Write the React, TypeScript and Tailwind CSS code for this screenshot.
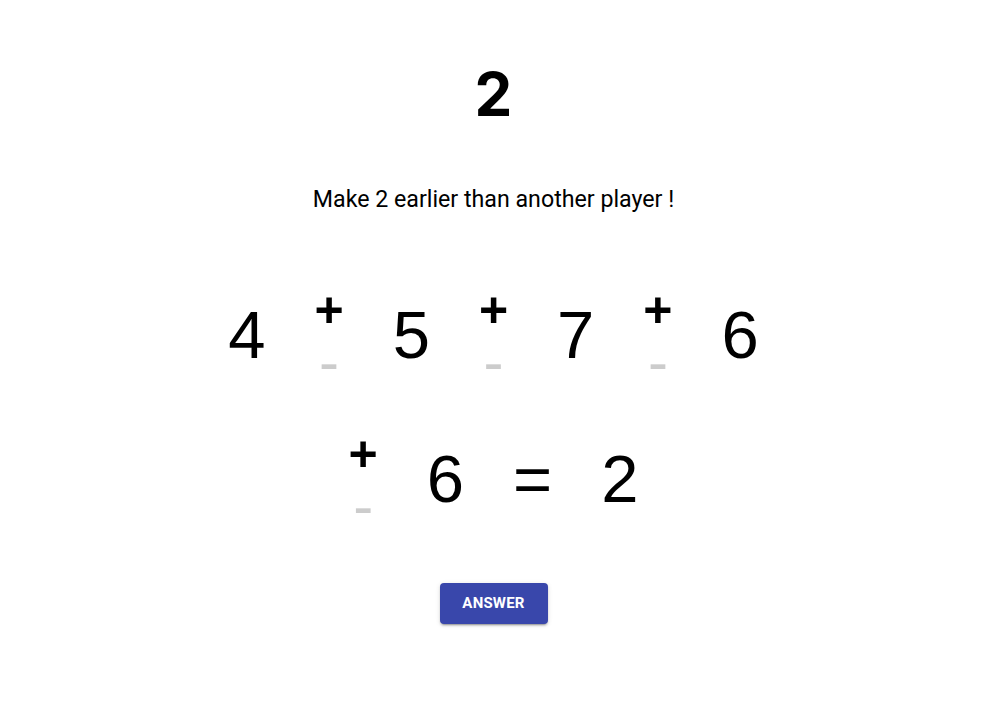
const terms = [4, 5, 7, 6, 6];

function Digit({ value }: { value: string | number }) {
  return (
    <span className="text-[67px] leading-none font-['Liberation_Sans',Arial,sans-serif] text-black">
      {value}
    </span>
  );
}

function Operator({ plus }: { plus: boolean }) {
  return (
    <div className="flex flex-col items-center font-['Liberation_Sans',Arial,sans-serif]">
      <button
        type="button"
        className={`h-[26px] text-[50px] leading-[26px] font-bold ${plus ? "text-black" : "text-[#cccccc]"}`}
      >
        +
      </button>
      <button
        type="button"
        className={`mt-[29px] h-[20px] text-[60px] leading-[20px] ${plus ? "text-[#cccccc]" : "text-black"}`}
      >
        -
      </button>
    </div>
  );
}

export default function App() {
  const items: React.ReactNode[] = [];
  terms.forEach((t, i) => {
    if (i > 0) items.push(<Operator key={`op-${i}`} plus />);
    items.push(<Digit key={`n-${i}`} value={t} />);
  });
  items.push(<Digit key="eq" value="=" />);
  items.push(<Digit key="res" value={2} />);

  return (
    <div className="flex min-h-[710px] flex-col items-center bg-white pl-[5px] text-black">
      <h1 className="mt-[64px] text-[60px] leading-none font-bold font-['Inter',sans-serif]">
        2
      </h1>
      <p className="mt-[64px] text-[23.2px] leading-none font-['Roboto',sans-serif]">
        Make 2 earlier than another player !
      </p>
      <div className="mt-[86px] flex max-w-[580px] flex-wrap items-center justify-center gap-x-[49px] gap-y-[69px]">
        {items}
      </div>
      <button
        type="button"
        className="mt-[67px] h-[41px] w-[108px] rounded-[4px] bg-[#3947ab] text-[15px] font-bold tracking-[0.2px] text-white uppercase shadow-[0_3px_1px_-2px_rgba(0,0,0,0.2),0_2px_2px_0_rgba(0,0,0,0.14),0_1px_5px_0_rgba(0,0,0,0.12)] font-['Roboto',sans-serif]"
      >
        Answer
      </button>
    </div>
  );
}
